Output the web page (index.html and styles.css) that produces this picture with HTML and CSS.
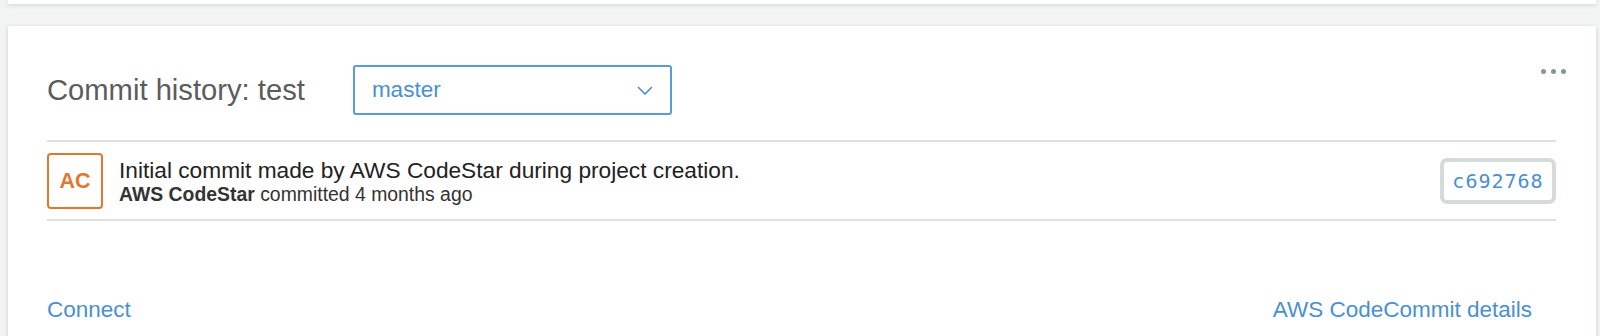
FILE: index.html
```html
<!DOCTYPE html>
<html lang="en">
<head>
    <meta charset="UTF-8">
    <meta name="viewport" content="width=device-width, initial-scale=1.0">
    <title>Commit history</title>
    <link rel="stylesheet" href="styles.css">
</head>
<body>

    <div class="card card-top"></div>

    <div class="card">
        <button type="button" class="more" aria-label="More">
            <span></span><span></span><span></span>
        </button>

        <div class="header">
            <h2>Commit history: test</h2>
            <div class="select">
                <span>master</span>
                <svg width="16" height="9" viewBox="0 0 16 9"><path d="M1 1 L8 8 L15 1" fill="none" stroke="#4a90d2" stroke-width="1.6"/></svg>
            </div>
        </div>

        <ul class="commits">
            <li class="commit">
                <div class="avatar">AC</div>
                <div class="commit-text">
                    <div class="message">Initial commit made by AWS CodeStar during project creation.</div>
                    <div class="meta"><b>AWS CodeStar</b> committed 4 months ago</div>
                </div>
                <button type="button" class="hash">c692768</button>
            </li>
        </ul>

        <div class="footer">
            <a href="#">Connect</a>
            <a href="#">AWS CodeCommit details</a>
        </div>
    </div>

</body>
</html>
```

FILE: styles.css
```css
body {
    font-family: 'Liberation Sans', Arial, sans-serif;
    background-color: #f2f3f3;
    color: #222;
    margin: 0;
    padding: 0 4px 0 8px;
}
.card {
    position: relative;
    background-color: #fff;
    box-shadow: 0 1px 4px rgba(0, 0, 0, 0.15);
    padding: 0 40px 0 39px;
    margin-top: 22px;
    height: 400px;
}
.card-top {
    height: 4px;
    margin-top: 0;
    padding: 0;
}
.more {
    position: absolute;
    top: 43px;
    right: 30px;
    display: flex;
    gap: 5px;
    background: none;
    border: none;
    padding: 0;
    cursor: pointer;
}
.more span {
    width: 5px;
    height: 5px;
    border-radius: 50%;
    background-color: #879596;
}
.header {
    display: flex;
    align-items: center;
    gap: 48px;
    padding-top: 39px;
    height: 50px;
    padding-bottom: 25px;
    border-bottom: 2px solid #e0e2e2;
}
h2 {
    margin: 0;
    font-size: 29.2px;
    font-weight: normal;
    color: #5c5c5c;
}
.select {
    box-sizing: border-box;
    width: 319px;
    height: 50px;
    border: 2px solid #5a9bd8;
    border-radius: 3px;
    display: flex;
    align-items: center;
    justify-content: space-between;
    padding: 0 17px 0 17px;
    color: #4a90d2;
    font-size: 22.5px;
}
.commits {
    list-style: none;
    margin: 0;
    padding: 0;
}
.commit {
    display: flex;
    align-items: center;
    padding: 11px 0 10px 0;
    border-bottom: 2px solid #e0e2e2;
}
.avatar {
    box-sizing: border-box;
    width: 56px;
    height: 56px;
    border: 2px solid #e1782f;
    border-radius: 4px;
    color: #e1782f;
    font-weight: bold;
    font-size: 21.5px;
    display: flex;
    align-items: center;
    justify-content: center;
    flex-shrink: 0;
}
.commit-text {
    flex: 1;
    margin-left: 16px;
    margin-top: -1px;
}
.message {
    font-size: 22.7px;
    line-height: 26px;
    color: #222;
}
.meta {
    font-size: 19.4px;
    line-height: 22px;
    color: #333;
}
.hash {
    box-sizing: border-box;
    width: 116px;
    height: 46px;
    background: #fff;
    border: 4px solid #d5dbdb;
    border-radius: 7px;
    color: #4a90d2;
    font-family: 'DejaVu Sans Mono', monospace;
    font-size: 20px;
    letter-spacing: 1px;
    padding: 0;
    cursor: pointer;
}
.footer {
    display: flex;
    justify-content: space-between;
    padding: 76px 24px 0 0;
    font-size: 22.5px;
}
.footer a {
    color: #4a90d2;
    text-decoration: none;
}
```
